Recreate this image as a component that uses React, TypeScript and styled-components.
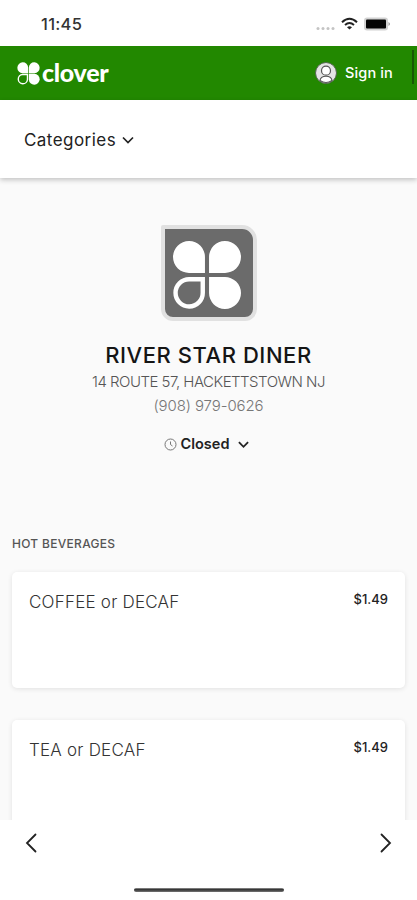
import React from "react";
import styled, { createGlobalStyle } from "styled-components";

const GlobalStyle = createGlobalStyle`
  * { box-sizing: border-box; }
  body { margin: 0; background: #fafafa; font-family: Inter, "Liberation Sans", sans-serif; }
  svg { display: block; flex: none; }
`;

const Screen = styled.div`
  width: 417px;
  height: 900px;
  display: flex;
  flex-direction: column;
  overflow: hidden;
  background: #fafafa;
  color: #222;
`;

const StatusBar = styled.div`
  flex: none;
  height: 46px;
  padding: 2px 26px 0 41px;
  display: flex;
  align-items: center;
  justify-content: space-between;
  background: #fff;
`;

const Clock = styled.span`
  font-size: 16.5px;
  font-weight: 500;
  letter-spacing: 0.3px;
  color: #333;
`;

const Header = styled.header`
  flex: none;
  height: 54px;
  padding: 0 3px 0 17px;
  display: flex;
  align-items: center;
  background: #228800;
  color: #fff;
`;

const Wordmark = styled.span`
  flex: 1;
  margin: -2px 0 0 2px;
  font-family: Lato, sans-serif;
  font-size: 25px;
  line-height: 30px;
  font-weight: 900;
  letter-spacing: -0.3px;
`;

const SignIn = styled.button`
  display: flex;
  align-items: center;
  gap: 8px;
  margin: -1px 19px 0 0;
  padding: 0;
  border: 0;
  background: none;
  color: #fff;
  font: 500 14.5px/20px Inter, sans-serif;
  letter-spacing: 0.15px;
`;

const ScrollThumb = styled.div`
  width: 2px;
  height: 34px;
  margin-top: -12px;
  background: #195705;
`;

const CategoryBar = styled.nav`
  flex: none;
  height: 78px;
  padding: 2px 24px 0;
  display: flex;
  align-items: center;
  gap: 6px;
  background: #fff;
  box-shadow: 0 2px 5px rgba(0, 0, 0, 0.22);
  font-size: 17px;
  font-weight: 400;
  letter-spacing: 0.45px;
`;

const Content = styled.main`
  flex: 1;
  min-height: 0;
  overflow: hidden;
`;

const Merchant = styled.section`
  height: 358px;
  padding-top: 47px;
  display: flex;
  flex-direction: column;
  align-items: center;
  white-space: nowrap;
`;

const LogoTile = styled.div`
  width: 96px;
  height: 96px;
  margin-left: 1px;
  padding: 12px 0 0 8px;
  border: 4px solid #e1e1e1;
  border-radius: 2px 15px 12px 12px;
  background: #6b6b6b;
`;

const Name = styled.h1`
  margin: 20px 0 0;
  font-size: 22px;
  line-height: 28px;
  font-weight: 500;
  letter-spacing: 0.55px;
  color: #151515;
`;

const Details = styled.div`
  margin-top: 1px;
  text-align: center;
`;

const Detail = styled.div<{ $tone: string; $spacing: string }>`
  font-size: 15px;
  line-height: 23.5px;
  font-weight: 300;
  color: ${(p) => p.$tone};
  letter-spacing: ${(p) => p.$spacing};
`;

const Hours = styled.div`
  margin: 17px 4px 0 0;
  display: flex;
  align-items: center;
  font-size: 14.5px;
  line-height: 20px;
  font-weight: 600;
`;

const HoursLabel = styled.span`
  margin: 0 9px 0 4px;
`;

const SectionTitle = styled.h2`
  margin: 0 12px;
  font-size: 12px;
  line-height: 16px;
  font-weight: 500;
  letter-spacing: 0.3px;
  color: #555;
`;

const Items = styled.div`
  margin: 20px 12px 0;
  display: flex;
  flex-direction: column;
  gap: 32px;
`;

const Card = styled.article`
  height: 116px;
  padding: 18px 17px;
  display: flex;
  justify-content: space-between;
  border-radius: 5px;
  background: #fff;
  box-shadow: 0 1px 5px rgba(0, 0, 0, 0.1);
`;

const ItemName = styled.span`
  font-size: 17px;
  line-height: 24px;
  font-weight: 300;
  letter-spacing: 0.22px;
  color: #333;
`;

const Price = styled.span`
  font-size: 13px;
  line-height: 19px;
  font-weight: 500;
`;

const BottomNav = styled.footer`
  flex: none;
  height: 80px;
  padding: 13px 25px 0;
  display: grid;
  grid-template-columns: 1fr 1fr;
  grid-template-rows: 20px 1fr;
  background: #fff;
  & > :nth-child(2) { justify-self: end; }
`;

const HomeBar = styled.div`
  grid-column: 1 / 3;
  justify-self: center;
  align-self: end;
  width: 150px;
  height: 4px;
  margin-bottom: 8px;
  border-radius: 2px;
  background: linear-gradient(#999, #303030 40%, #777);
`;

const Leaves = ({ size, gap, ring, fill }: { size: number; gap: number; ring: number; fill: string }) => {
  const a = 50 - gap;
  const b = 50 + gap;
  return (
    <svg width={size} height={size} viewBox="0 0 100 100" fill={fill}>
      <path d={`M${a} ${a}H24A23.5 23.5 0 1 1 ${a} 24Z`} />
      <path d={`M${b} ${a}V24A23.5 23.5 0 1 1 76 ${a}Z`} />
      <path d={`M${b} ${b}H76A23.5 23.5 0 1 1 ${b} 76Z`} />
      <path
        d={`M${a - ring / 2} ${b + ring / 2}V76A20 20 0 1 1 24 ${b + ring / 2}Z`}
        fill="none"
        stroke={fill}
        strokeWidth={ring}
      />
    </svg>
  );
};

const Chevron = ({ size = 12, w = 1.7 }: { size?: number; w?: number }) => (
  <svg width={size} height={size} viewBox="0 0 12 12" fill="none" stroke="#222" strokeWidth={w}>
    <path d="M1 3.5L6 8.5L11 3.5" />
  </svg>
);

const Arrow = ({ d }: { d: string }) => (
  <svg width="12" height="20" viewBox="0 0 12 20" fill="none" stroke="#222" strokeWidth="1.8" strokeLinecap="round">
    <path d={d} />
  </svg>
);

const StatusIcons = () => (
  <svg width="76" height="16" viewBox="0 0 76 16">
    <g fill="#c4c4c4">
      <circle cx="3" cy="12.5" r="1.5" />
      <circle cx="8" cy="12.5" r="1.5" />
      <circle cx="13" cy="12.5" r="1.5" />
      <circle cx="18" cy="12.5" r="1.5" />
    </g>
    <g fill="none" stroke="#222" strokeWidth="2">
      <path d="M27 6.200Q34.500 -0.700 42 6.200" />
      <path d="M30 9Q34.500 5.100 39 9" />
    </g>
    <path d="M32 11.200Q34.500 9.200 37 11.200L34.500 13.600Z" fill="#222" />
    <rect x="49" y="1.500" width="24" height="13" rx="3" fill="#d2d2d2" />
    <rect x="51" y="3.500" width="20" height="9" rx="1" fill="#050505" />
    <path d="M73.500 6Q76.500 8 73.500 10Z" fill="#999" />
  </svg>
);

const Avatar = () => (
  <svg width="22" height="22" viewBox="0 0 22 22">
    <circle cx="11" cy="11" r="10.500" fill="#e4e4e4" stroke="#53664f" />
    <path d="M5 18.500C5.600 12.800 16.400 12.800 17 18.500Q11 22.500 5 18.500Z" fill="#fff" stroke="#555" strokeWidth="1.100" />
    <circle cx="11" cy="8.700" r="4.500" fill="#fff" stroke="#555" strokeWidth="1.200" />
  </svg>
);

const ClockIcon = () => (
  <svg width="13" height="13" viewBox="0 0 13 13" fill="none" stroke="#777">
    <circle cx="6.500" cy="6.500" r="5.500" />
    <path d="M6.500 3.500V6.500L8.500 8" />
  </svg>
);

const menu = [
  { name: "COFFEE or DECAF", price: "$1.49" },
  { name: "TEA or DECAF", price: "$1.49" },
];

export default function App() {
  return (
    <Screen>
      <GlobalStyle />
      <StatusBar>
        <Clock>11:45</Clock>
        <StatusIcons />
      </StatusBar>
      <Header>
        <Leaves size={23} gap={1.5} ring={6} fill="#fff" />
        <Wordmark>clover</Wordmark>
        <SignIn>
          <Avatar />
          Sign in
        </SignIn>
        <ScrollThumb />
      </Header>
      <CategoryBar>
        Categories
        <Chevron />
      </CategoryBar>
      <Content>
        <Merchant>
          <LogoTile>
            <Leaves size={68} gap={3} ring={6.5} fill="#fff" />
          </LogoTile>
          <Name>RIVER STAR DINER</Name>
          <Details>
            <Detail $tone="#555" $spacing="-0.52px">14 ROUTE 57, HACKETTSTOWN NJ</Detail>
            <Detail $tone="#777" $spacing="-0.1px">(908) 979-0626</Detail>
          </Details>
          <Hours>
            <ClockIcon />
            <HoursLabel>Closed</HoursLabel>
            <Chevron size={11} w={2} />
          </Hours>
        </Merchant>
        <SectionTitle>HOT BEVERAGES</SectionTitle>
        <Items>
          {menu.map((item) => (
            <Card key={item.name}>
              <ItemName>{item.name}</ItemName>
              <Price>{item.price}</Price>
            </Card>
          ))}
        </Items>
      </Content>
      <BottomNav>
        <Arrow d="M10.500 1.500L2 10L10.500 18.500" />
        <Arrow d="M1.500 1.500L10 10L1.500 18.500" />
        <HomeBar />
      </BottomNav>
    </Screen>
  );
}
